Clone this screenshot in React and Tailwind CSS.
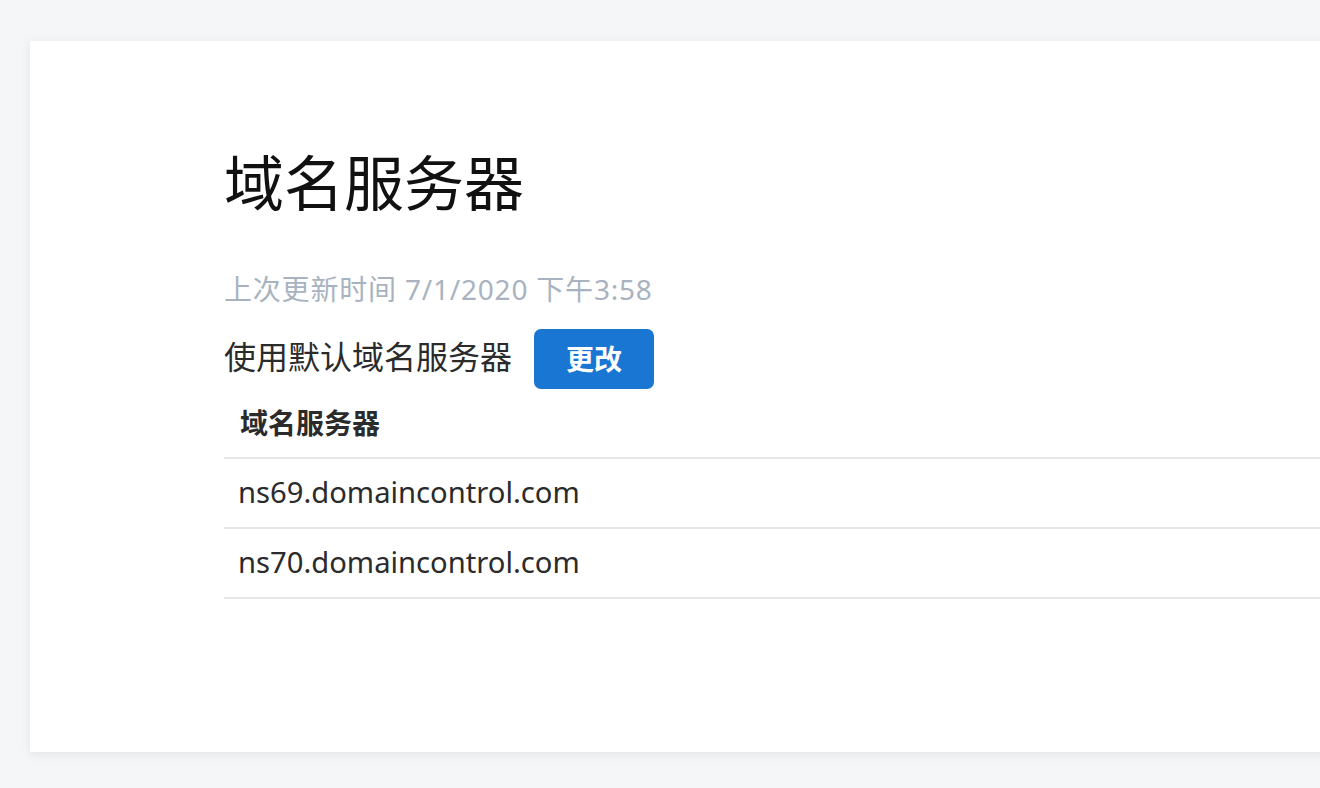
const servers = ["ns69.domaincontrol.com", "ns70.domaincontrol.com"];

function App() {
  return (
    <div
      className="w-[1320px] h-[788px] overflow-hidden bg-[#f5f6f8] pt-[41px] pl-[30px]"
      style={{ fontFamily: '"Noto Sans", "Noto Sans CJK SC", sans-serif' }}
    >
      <div className="w-[1340px] h-[711px] bg-white shadow-[0_2px_10px_rgba(0,0,0,0.08)] pl-[194px] pt-[106px]">
        <h1 className="text-[60px] leading-[72px] text-[#111] font-normal">
          域名服务器
        </h1>

        <p className="mt-[50px] text-[28px] leading-[40px] tracking-[0.8px] text-[#a8b3bf]">
          上次更新时间 7/1/2020 下午3:58
        </p>

        <div className="mt-[20px] flex items-center gap-[22px] h-[60px]">
          <span className="text-[32px] leading-[40px] -mt-[4px] text-[#2b2b2b]">
            使用默认域名服务器
          </span>
          <button className="w-[120px] h-[60px] rounded-[7px] bg-[#1976d3] text-white text-[28px] font-semibold">
            更改
          </button>
        </div>

        <div className="w-full">
          <div className="h-[70px] border-b-2 border-[#e6e6e6] flex items-center pl-4 text-[28px] font-bold text-[#2b2b2b]">
            域名服务器
          </div>
          {servers.map((name) => (
            <div
              key={name}
              className="h-[70px] border-b-2 border-[#e6e6e6] flex items-center pl-[14px] text-[29.2px] text-[#2b2b2b]"
            >
              {name}
            </div>
          ))}
        </div>
      </div>
    </div>
  );
}

export default App;
